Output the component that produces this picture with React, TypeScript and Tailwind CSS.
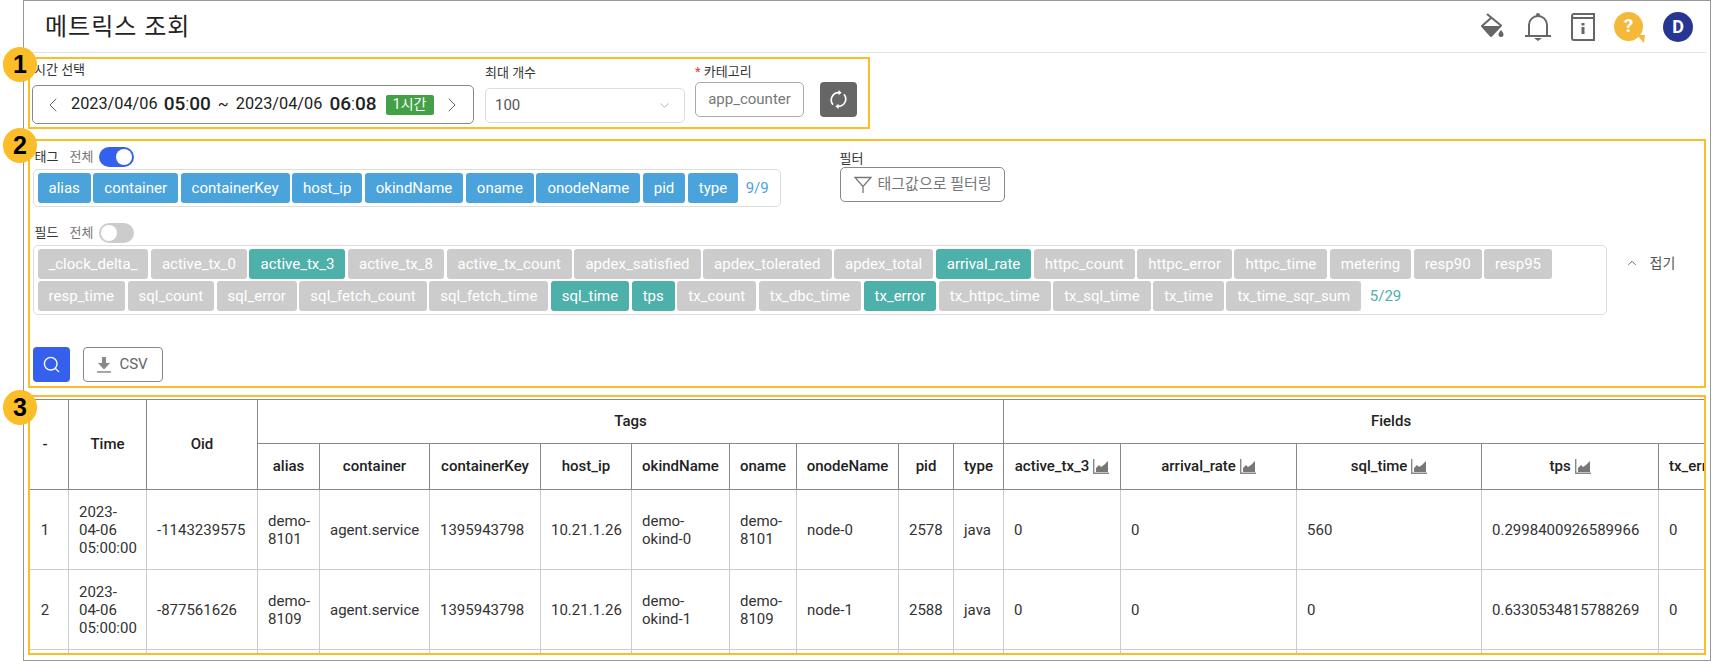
import { ChevronDown, ChevronLeft, ChevronRight, ChevronUp, Search } from 'lucide-react'

const tagChips = ['alias', 'container', 'containerKey', 'host_ip', 'okindName', 'oname', 'onodeName', 'pid', 'type']

const fieldChips = [
  '_clock_delta_', 'active_tx_0', 'active_tx_3', 'active_tx_8', 'active_tx_count', 'apdex_satisfied', 'apdex_tolerated',
  'apdex_total', 'arrival_rate', 'httpc_count', 'httpc_error', 'httpc_time', 'metering', 'resp90', 'resp95', 'resp_time',
  'sql_count', 'sql_error', 'sql_fetch_count', 'sql_fetch_time', 'sql_time', 'tps', 'tx_count', 'tx_dbc_time', 'tx_error',
  'tx_httpc_time', 'tx_sql_time', 'tx_time', 'tx_time_sqr_sum',
]
const activeFields = ['active_tx_3', 'arrival_rate', 'sql_time', 'tps', 'tx_error']

const colWidths = [39, 78, 111, 62, 110, 111, 91, 98, 67, 102, 55, 50, 117, 176, 185, 177, 120]
const tagCols = ['alias', 'container', 'containerKey', 'host_ip', 'okindName', 'oname', 'onodeName', 'pid', 'type']
const fieldCols = ['active_tx_3', 'arrival_rate', 'sql_time', 'tps', 'tx_error']

const rows = [
  ['1', '2023-04-06 05:00:00', '-1143239575', 'demo-8101', 'agent.service', '1395943798', '10.21.1.26', 'demo-okind-0', 'demo-8101', 'node-0', '2578', 'java', '0', '0', '560', '0.2998400926589966', '0'],
  ['2', '2023-04-06 05:00:00', '-877561626', 'demo-8109', 'agent.service', '1395943798', '10.21.1.26', 'demo-okind-1', 'demo-8109', 'node-1', '2588', 'java', '0', '0', '0', '0.6330534815788269', '0'],
  ['', '', '', '', '', '', '', '', '', '', '', '', '', '', '', '', ''],
]

function Badge({ n, className }: { n: number; className: string }) {
  return (
    <div className={`absolute left-[3px] z-10 flex h-[35px] w-[34px] items-center justify-center rounded-full bg-[#fbbe28] font-['Liberation_Sans',sans-serif] text-[25px] font-bold text-black ${className}`}>
      {n}
    </div>
  )
}

function Toggle({ on }: { on: boolean }) {
  return (
    <div className={`flex h-[20px] w-[35px] items-center rounded-full px-[2px] ${on ? 'justify-end bg-[#3560ee]' : 'justify-start bg-[#cccccc]'}`}>
      <div className="h-[16px] w-[16px] rounded-full bg-white" />
    </div>
  )
}

function Chip({ label, color }: { label: string; color: string }) {
  return <div className={`flex h-[30px] items-center rounded-[3px] px-[11px] text-[15px] text-white ${color}`}>{label}</div>
}

function ChartIcon() {
  return (
    <svg width="16" height="15" viewBox="0 0 16 15" className="ml-[4px] inline-block align-[-3px]">
      <path d="M.7 0v14.200H16" fill="none" stroke="#888" strokeWidth="1.400" />
      <path d="M3 13V9l3-3 2 2 3-2 4-4v11z" fill="#777" />
    </svg>
  )
}

function HeaderIcons() {
  return (
    <div className="flex items-center">
      <svg width="24" height="27" viewBox="0 0 24 27" className="mr-[20px]">
        <path d="M6 1l14 11.500L10 23 1 13 10 5" fill="none" stroke="#666" strokeWidth="2" strokeLinejoin="round" />
        <path d="M1 13h19L10 23z" fill="#666" />
        <path d="M20 17c-1.500 2-2.500 3-2.500 4.500a2.500 2.500 0 0 0 5 0C22.500 20 21.500 19 20 17z" fill="#666" />
      </svg>
      <svg width="26" height="29" viewBox="0 0 26 29" className="mr-[20px]">
        <path d="M0 24h26M4 24V13a9 9 0 0 1 18 0v11" fill="none" stroke="#666" strokeWidth="2" />
        <circle cx="13" cy="3" r="2" fill="#666" />
        <path d="M9 26h8l-4 3z" fill="#666" />
      </svg>
      <svg width="24" height="28" viewBox="0 0 24 28" className="mr-[19px]">
        <path d="M23 5H3a2 2 0 0 1-2-2c0-1 1-2 2-2h20v26H3a2 2 0 0 1-2-2V3" fill="none" stroke="#666" strokeWidth="2" />
        <path d="M10.500 10h3v2.500h-3zM10.500 14h3v7h-3z" fill="#666" />
      </svg>
      <div className="relative mr-[20px] flex h-[29px] w-[29px] items-center justify-center rounded-full bg-[#f5b93a] text-[19px] font-bold text-white">
        ?
        <svg width="8" height="8" viewBox="0 0 8 8" className="absolute bottom-[-2px] right-[-2px]">
          <path d="M0 0h8L7 8z" fill="#f5b93a" />
        </svg>
      </div>
      <div className="mr-[13px] flex h-[30px] w-[30px] items-center justify-center rounded-full bg-[#283593] text-[18px] font-bold text-white">D</div>
    </div>
  )
}

function TimeSection() {
  return (
    <div className="mt-[4px] ml-[4px] flex h-[72px] w-[842px] border-2 border-[#fbbe28] pl-[2px]">
      <div className="pt-[2px]">
        <div className="h-[18px] pl-[2px] text-[13px] leading-[18px] text-[#333]">시간 선택</div>
        <div className="mt-[6px] flex h-[39px] w-[442px] items-center rounded-[5px] border border-[#888] pl-[8px] pr-[9px] text-[#222]">
          <ChevronLeft size={24} strokeWidth={1} className="text-[#666]" />
          <span className="ml-[6px] text-[16.300px]">2023/04/06</span>
          <span className="ml-[6px] text-[19px] font-medium">05</span>
          <span className="text-[19px] font-light">:</span>
          <span className="text-[19px] font-medium">00</span>
          <span className="ml-[7px] text-[16px]">~</span>
          <span className="ml-[7px] text-[16.300px]">2023/04/06</span>
          <span className="ml-[7px] text-[19px] font-medium">06</span>
          <span className="text-[19px] font-light">:</span>
          <span className="text-[19px] font-medium">08</span>
          <span className="ml-[9px] flex h-[20px] w-[48px] items-center justify-center rounded-[2px] bg-[#43a047] text-[14px] text-white">1시간</span>
          <ChevronRight size={24} strokeWidth={1} className="ml-auto text-[#666]" />
        </div>
      </div>
      <div className="ml-[11px] pt-[5px]">
        <div className="h-[18px] text-[13px] leading-[18px] text-[#333]">최대 개수</div>
        <div className="mt-[6px] flex h-[35px] w-[200px] items-center justify-between rounded-[5px] border border-[#ddd] pl-[9px] pr-[12px] text-[15px] text-[#555]">
          100
          <ChevronDown size={15} strokeWidth={1} className="text-[#888]" />
        </div>
      </div>
      <div className="ml-[10px] pt-[4px]">
        <div className="h-[18px] text-[13px] leading-[18px] text-[#333]">
          <span className="text-[#e53935]">* </span>카테고리
        </div>
        <div className="mt-px flex h-[35px] w-[109px] items-center justify-center rounded-[5px] border border-[#aaa] text-[15px] text-[#777]">app_counter</div>
      </div>
      <button className="mt-[23px] ml-[16px] flex h-[35px] w-[37px] items-center justify-center rounded-[4px] bg-[#666]">
        <svg width="17" height="19" viewBox="0 0 16 18" fill="none" stroke="white" strokeWidth="1.600">
          <path d="M2.800 14A7 7 0 0 1 8 2.500h1" />
          <path d="M13.200 4A7 7 0 0 1 8 15.500H7" />
          <path d="M8 0v5l3-2.500zM8 13v5l-3-2.500z" fill="white" stroke="none" />
        </svg>
      </button>
    </div>
  )
}

function TagFieldSection() {
  return (
    <div className="mt-[10px] ml-[4px] h-[249px] w-[1678px] border-2 border-[#fbbe28] pl-[2.500px] pt-[6px] text-[#333]">
      <div className="flex">
        <div className="w-[807px]">
          <div className="flex h-[20px] items-center pl-[2px] text-[13px]">
            <span className="w-[35px]">태그</span>
            <span className="w-[29px] text-[#777]">전체</span>
            <Toggle on />
          </div>
          <div className="mt-[2px] flex h-[38px] w-[748px] items-center gap-[2.500px] rounded-[5px] border border-[#ddd] pl-[4px]">
            {tagChips.map((c) => (
              <Chip key={c} label={c} color="bg-[#4aa3db]" />
            ))}
            <span className="ml-[5px] text-[15px] text-[#4aa3db]">9/9</span>
          </div>
        </div>
        <div>
          <div className="h-[20px] pt-[2px] text-[13px]">필터</div>
          <div className="flex h-[35px] w-[165px] items-center rounded-[5px] border border-[#888] pl-[13px] text-[15px] text-[#777]">
            <svg width="18" height="17" viewBox="0 0 18 17" fill="none" stroke="#777" strokeWidth="1.300" className="mr-[6px]">
              <path d="M1 1.500h16L9 10.500zM9 10.500V17" />
            </svg>
            태그값으로 필터링
          </div>
        </div>
      </div>
      <div className="mt-[16px] flex h-[20px] items-center pl-[2px] text-[13px]">
        <span className="w-[35px]">필드</span>
        <span className="w-[29px] text-[#777]">전체</span>
        <Toggle on={false} />
      </div>
      <div className="mt-[2px] flex">
        <div className="flex h-[70px] w-[1574px] flex-wrap content-center gap-x-[2.500px] gap-y-[2px] rounded-[5px] border border-[#ddd] pl-[4px]">
          {fieldChips.map((c) => (
            <Chip key={c} label={c} color={activeFields.includes(c) ? 'bg-[#4db0aa]' : 'bg-[#cccccc]'} />
          ))}
          <span className="ml-[6px] flex items-center text-[15px] text-[#4db0aa]">5/29</span>
        </div>
        <div className="ml-[18px] flex h-[36px] items-center text-[14px] text-[#555]">
          <ChevronUp size={14} strokeWidth={1.5} className="mr-[11px]" />
          접기
        </div>
      </div>
      <div className="mt-[32px] flex">
        <button className="flex h-[35px] w-[37px] items-center justify-center rounded-[4px] bg-[#3560ee] text-white">
          <Search size={19} strokeWidth={1.75} />
        </button>
        <button className="ml-[13px] flex h-[35px] w-[80px] items-center justify-center rounded-[4px] border border-[#888] text-[15px] text-[#666]">
          <svg width="14" height="16" viewBox="0 0 14 16" className="mr-[8px]">
            <path d="M5 0h4v6h4l-6 6.500L1 6h4z" fill="#888" />
            <path d="M0 15h14" stroke="#888" strokeWidth="1.500" />
          </svg>
          CSV
        </button>
      </div>
    </div>
  )
}

function DataTable() {
  const head = 'border-r border-b border-[#888] px-[10px] text-center text-[15px] font-medium text-[#222]'
  return (
    <div className="mt-[7px] ml-[4px] h-[260px] w-[1678px] overflow-hidden border-2 border-[#fbbe28] pt-[2px]">
      <table className="w-[1749px] table-fixed border-separate border-spacing-0 border-t border-[#888]">
        <colgroup>
          {colWidths.map((w, i) => (
            <col key={i} style={{ width: w }} />
          ))}
        </colgroup>
        <thead>
          <tr className="h-[44px]">
            <th rowSpan={2} className={`${head} !pl-0 !pr-[8px]`}>-</th>
            <th rowSpan={2} className={head}>Time</th>
            <th rowSpan={2} className={head}>Oid</th>
            <th colSpan={9} className={head}>Tags</th>
            <th colSpan={5} className={head}>Fields</th>
          </tr>
          <tr className="h-[46px]">
            {tagCols.map((c) => (
              <th key={c} className={`${head} !px-0`}>{c}</th>
            ))}
            {fieldCols.map((c) => (
              <th key={c} className={`${head} whitespace-nowrap !px-0 ${c === 'tx_error' ? '!pl-[10px] !text-left' : ''}`}>
                {c}
                {c !== 'tx_error' && <ChartIcon />}
              </th>
            ))}
          </tr>
        </thead>
        <tbody>
          {rows.map((row, i) => (
            <tr key={i} className="h-[80px]">
              {row.map((cell, j) => (
                <td
                  key={j}
                  className={`border-r border-b border-[#ccc] text-[15px] leading-[18px] text-[#333] ${j === 0 ? 'pr-[8px] text-center' : 'px-[10px]'}`}
                >
                  {cell}
                </td>
              ))}
            </tr>
          ))}
        </tbody>
      </table>
    </div>
  )
}

export default function App() {
  return (
    <div className="relative h-[661px] w-[1712px] overflow-hidden bg-white font-[family-name:Roboto,'Noto_Sans_CJK_KR',sans-serif]">
      <Badge n={1} className="top-[47px]" />
      <Badge n={2} className="top-[128px]" />
      <Badge n={3} className="top-[390px]" />
      <div className="ml-[23px] h-[661px] w-[1688px] border border-[#999]">
        <div className="mr-[4px] flex h-[52px] items-center justify-between border-b border-[#e4e4e4] pl-[21px]">
          <h1 className="text-[24px] font-normal tracking-[1px] text-[#222]">메트릭스 조회</h1>
          <HeaderIcons />
        </div>
        <TimeSection />
        <TagFieldSection />
        <DataTable />
      </div>
    </div>
  )
}
